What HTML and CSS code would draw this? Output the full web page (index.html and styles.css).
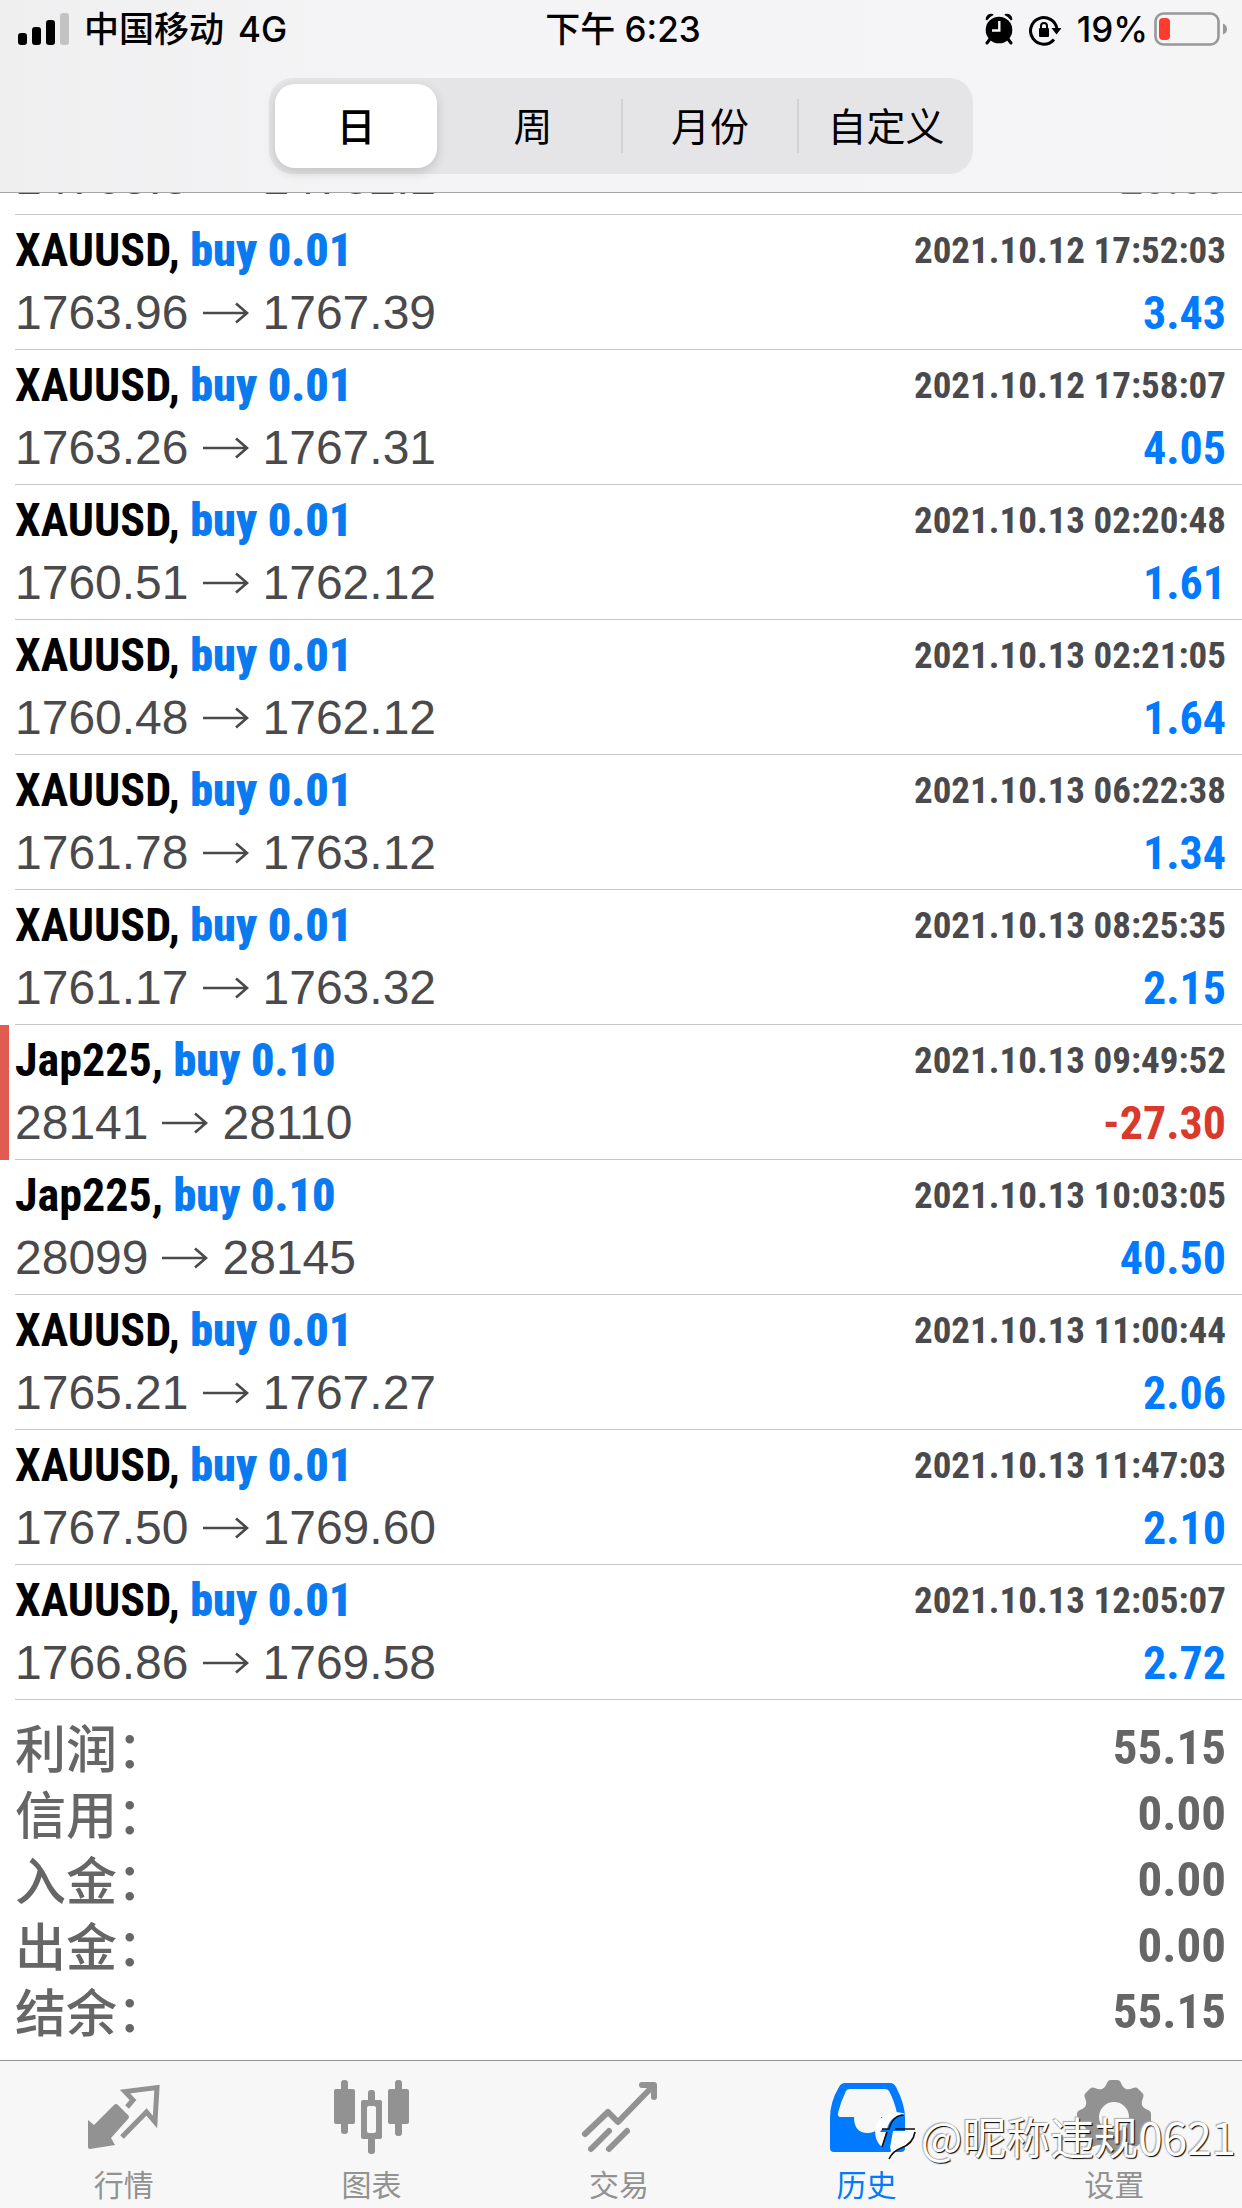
FILE: index.html
```
<!DOCTYPE html>
<html lang="zh-CN">
<head>
<meta charset="utf-8">
<meta name="viewport" content="width=device-width, initial-scale=1">
<title>历史</title>
<link rel="stylesheet" href="styles.css">
</head>
<body>
<svg class="defs" width="0" height="0" aria-hidden="true">
  <symbol id="arrow" viewBox="0 0 48 30"><path d="M1 15H45M34 5.500L45 15L34 24.500" fill="none" stroke="currentColor" stroke-width="2.600"/></symbol>
</svg>
<div class="app">
  <header class="top">
    <div class="status">
      <div class="status-left">
        <svg width="52" height="34" viewBox="0 0 52 34" aria-hidden="true">
          <rect x="0" y="21" width="9" height="12" rx="3"/><rect x="14" y="15" width="9" height="18" rx="3"/>
          <rect x="28" y="8" width="9" height="25" rx="3"/><rect x="42" y="1" width="9" height="32" rx="3" fill="#c3c3c4"/>
        </svg>
        <span>中国移动</span><span>4G</span>
      </div>
      <div class="status-time">下午 6:23</div>
      <div class="status-right">
        <svg width="28" height="34" viewBox="0 0 28 34" aria-hidden="true">
          <circle cx="14" cy="18" r="13.300"/>
          <path d="M.7 7.500A5.500 5.500 0 0 1 8 2L8.500 3Q4 5 2 8.500ZM27.300 7.500A5.500 5.500 0 0 0 20 2L19.500 3Q24 5 26 8.500Z"/>
          <path d="M5 27L2 31M23 27L26 31" stroke="#000" stroke-width="3" stroke-linecap="round"/>
          <path d="M14.300 9V18.500H7" fill="none" stroke="#f5f5f6" stroke-width="2.400"/>
        </svg>
        <svg width="32" height="34" viewBox="0 0 32 34" aria-hidden="true">
          <path d="M25 27.500A13.300 13.300 0 1 1 28 17" fill="none" stroke="#000" stroke-width="3"/>
          <path d="M22.500 16H32.500L27.500 22.500Z"/>
          <rect x="10" y="16" width="10" height="9" rx="1"/>
          <path d="M12 17V14A3 3 0 0 1 18 14V17" fill="none" stroke="#000" stroke-width="2"/>
        </svg>
        <span>19%</span>
        <svg width="74" height="34" viewBox="0 0 74 34" aria-hidden="true">
          <rect x="1.500" y="1.500" width="63" height="31" rx="8" fill="none" stroke="#98989a" stroke-width="2.600"/>
          <rect x="5" y="6" width="11" height="22" rx="4" fill="#ff3b30"/>
          <path d="M69 11.500Q73 13 73 17Q73 21 69 22.500Z" fill="#98989a"/>
        </svg>
      </div>
    </div>
    <div class="segments">
      <button class="segment selected" type="button">日</button>
      <button class="segment" type="button">周</button>
      <button class="segment divided" type="button">月份</button>
      <button class="segment divided" type="button">自定义</button>
    </div>
  </header>

  <main class="history">
    <ul class="deals">
      <li class="deal"><div class="deal-body">
        <div class="deal-head"></div>
        <div class="deal-foot"><span class="price">14765.8<svg class="arrow"><use href="#arrow"/></svg>14782.1</span><span class="profit">28.60</span></div>
      </div></li>
      <li class="deal"><div class="deal-body">
        <div class="deal-head"><span class="symbol">XAUUSD, <b>buy 0.01</b></span><time>2021.10.12 17:52:03</time></div>
        <div class="deal-foot"><span class="price">1763.96<svg class="arrow"><use href="#arrow"/></svg>1767.39</span><span class="profit">3.43</span></div>
      </div></li>
      <li class="deal"><div class="deal-body">
        <div class="deal-head"><span class="symbol">XAUUSD, <b>buy 0.01</b></span><time>2021.10.12 17:58:07</time></div>
        <div class="deal-foot"><span class="price">1763.26<svg class="arrow"><use href="#arrow"/></svg>1767.31</span><span class="profit">4.05</span></div>
      </div></li>
      <li class="deal"><div class="deal-body">
        <div class="deal-head"><span class="symbol">XAUUSD, <b>buy 0.01</b></span><time>2021.10.13 02:20:48</time></div>
        <div class="deal-foot"><span class="price">1760.51<svg class="arrow"><use href="#arrow"/></svg>1762.12</span><span class="profit">1.61</span></div>
      </div></li>
      <li class="deal"><div class="deal-body">
        <div class="deal-head"><span class="symbol">XAUUSD, <b>buy 0.01</b></span><time>2021.10.13 02:21:05</time></div>
        <div class="deal-foot"><span class="price">1760.48<svg class="arrow"><use href="#arrow"/></svg>1762.12</span><span class="profit">1.64</span></div>
      </div></li>
      <li class="deal"><div class="deal-body">
        <div class="deal-head"><span class="symbol">XAUUSD, <b>buy 0.01</b></span><time>2021.10.13 06:22:38</time></div>
        <div class="deal-foot"><span class="price">1761.78<svg class="arrow"><use href="#arrow"/></svg>1763.12</span><span class="profit">1.34</span></div>
      </div></li>
      <li class="deal"><div class="deal-body">
        <div class="deal-head"><span class="symbol">XAUUSD, <b>buy 0.01</b></span><time>2021.10.13 08:25:35</time></div>
        <div class="deal-foot"><span class="price">1761.17<svg class="arrow"><use href="#arrow"/></svg>1763.32</span><span class="profit">2.15</span></div>
      </div></li>
      <li class="deal stopped"><div class="deal-body">
        <div class="deal-head"><span class="symbol">Jap225, <b>buy 0.10</b></span><time>2021.10.13 09:49:52</time></div>
        <div class="deal-foot"><span class="price">28141<svg class="arrow"><use href="#arrow"/></svg>28110</span><span class="profit loss">-27.30</span></div>
      </div></li>
      <li class="deal"><div class="deal-body">
        <div class="deal-head"><span class="symbol">Jap225, <b>buy 0.10</b></span><time>2021.10.13 10:03:05</time></div>
        <div class="deal-foot"><span class="price">28099<svg class="arrow"><use href="#arrow"/></svg>28145</span><span class="profit">40.50</span></div>
      </div></li>
      <li class="deal"><div class="deal-body">
        <div class="deal-head"><span class="symbol">XAUUSD, <b>buy 0.01</b></span><time>2021.10.13 11:00:44</time></div>
        <div class="deal-foot"><span class="price">1765.21<svg class="arrow"><use href="#arrow"/></svg>1767.27</span><span class="profit">2.06</span></div>
      </div></li>
      <li class="deal"><div class="deal-body">
        <div class="deal-head"><span class="symbol">XAUUSD, <b>buy 0.01</b></span><time>2021.10.13 11:47:03</time></div>
        <div class="deal-foot"><span class="price">1767.50<svg class="arrow"><use href="#arrow"/></svg>1769.60</span><span class="profit">2.10</span></div>
      </div></li>
      <li class="deal"><div class="deal-body">
        <div class="deal-head"><span class="symbol">XAUUSD, <b>buy 0.01</b></span><time>2021.10.13 12:05:07</time></div>
        <div class="deal-foot"><span class="price">1766.86<svg class="arrow"><use href="#arrow"/></svg>1769.58</span><span class="profit">2.72</span></div>
      </div></li>
    </ul>
    <dl class="totals">
      <div class="total"><dt>利润：</dt><dd>55.15</dd></div>
      <div class="total"><dt>信用：</dt><dd>0.00</dd></div>
      <div class="total"><dt>入金：</dt><dd>0.00</dd></div>
      <div class="total"><dt>出金：</dt><dd>0.00</dd></div>
      <div class="total"><dt>结余：</dt><dd>55.15</dd></div>
    </dl>
  </main>

  <nav class="tabs">
    <a class="tab" href="#quotes">
      <svg class="tab-icon" viewBox="0 0 84 80" aria-hidden="true">
        <path d="M45 31L51 24L43 15.500L75 11.500L73 46L64.500 36L40 61" fill="none" stroke="currentColor" stroke-width="5"/>
        <path d="M32 29Q34 27 36 29L46 39Q48 41 46 43L29 62L33 69L8 73Q6 73 6 71V44L12 49Z" fill="currentColor"/>
      </svg>
      <span>行情</span>
    </a>
    <a class="tab" href="#charts">
      <svg class="tab-icon" viewBox="0 0 84 80" fill="currentColor" aria-hidden="true">
        <rect x="5" y="13" width="21" height="35" rx="2"/><rect x="12" y="4" width="7" height="54" rx="3"/>
        <rect x="59" y="13" width="21" height="35" rx="2"/><rect x="66" y="4" width="7" height="56" rx="3"/>
        <rect x="39" y="14" width="7" height="64" rx="3"/><rect x="32" y="24" width="21" height="39" rx="2"/>
        <rect x="38" y="30" width="9" height="27" rx="2" fill="#f7f7f7"/>
      </svg>
      <span>图表</span>
    </a>
    <a class="tab" href="#trade">
      <svg class="tab-icon" viewBox="0 0 84 80" fill="none" stroke="currentColor" stroke-width="6" stroke-linecap="round" stroke-linejoin="round" aria-hidden="true">
        <path d="M8 58L31 36L41 46L76 10M65 9H77V21M14 73L32 55M32 73L50 55"/>
      </svg>
      <span>交易</span>
    </a>
    <a class="tab active" href="#history" aria-current="page">
      <svg class="tab-icon" viewBox="0 0 84 80" fill="currentColor" aria-hidden="true">
        <path fill-rule="evenodd" d="M20 7H65Q69 7 71 11Q80 28 80 42V72Q80 76 76 76H9Q5 76 5 72V42Q5 26 14 11Q16 7 20 7ZM25 13Q22 13 21 15Q16 25 13 37Q12 41 16 41H29Q29 57 42.500 57Q56 57 56 41H69Q73 41 72 37Q69 24 64 15Q63 13 60 13Z"/>
      </svg>
      <span>历史</span>
    </a>
    <a class="tab" href="#settings">
      <svg class="tab-icon" viewBox="0 0 84 80" aria-hidden="true">
        <circle cx="42" cy="41" r="22.500" fill="none" stroke="currentColor" stroke-width="15"/>
        <g fill="currentColor">
          <path id="tooth" d="M30 13Q33 12 35 7Q36 4 39 4H45Q48 4 49 7Q51 12 54 13L50 20H34Z"/>
          <use href="#tooth" transform="rotate(45 42 41)"/><use href="#tooth" transform="rotate(90 42 41)"/>
          <use href="#tooth" transform="rotate(135 42 41)"/><use href="#tooth" transform="rotate(180 42 41)"/>
          <use href="#tooth" transform="rotate(225 42 41)"/><use href="#tooth" transform="rotate(270 42 41)"/>
          <use href="#tooth" transform="rotate(315 42 41)"/>
        </g>
      </svg>
      <span>设置</span>
    </a>
  </nav>

  <div class="watermark">
    <svg width="46" height="52" viewBox="0 0 46 52" aria-hidden="true">
      <path d="M31 4Q22 1 14 5Q3 10 2 20Q2 32 9 37L13 22H7L9 19H14Q17 6 31 4ZM20 21H42Q40 34 28 38Q19 41 16 48Q19 39 17 38Z" fill="#fff"/>
      <path d="M31 5Q20 5 16 19H9M22 19H42M9 37L14 22M42 22Q40 34 28 38Q20 41 16 49" fill="none" stroke="#111" stroke-width="1.600"/>
      <path d="M31 4Q22 1 14 5Q3 10 2 20" fill="none" stroke="#fff"/>
    </svg>
    <span>@昵称违规0621</span>
  </div>
</div>
</body>
</html>
```
FILE: styles.css
```
* {
  box-sizing: border-box;
}

body {
  margin: 0;
  background: #fff;
  font-family: "Liberation Sans", "Noto Sans CJK SC", sans-serif;
}

.defs {
  position: absolute;
}

.app {
  position: relative;
  display: flex;
  flex-direction: column;
  height: 100vh;
}

/* status bar and period switch */
.top {
  flex: none;
  padding-bottom: 18px;
  border-bottom: 1px solid #a6a6a8;
  background: linear-gradient(90deg, #efeff0, #f4f4f6 30%, #f5f5f6);
}

.status {
  display: grid;
  grid-template-columns: 1fr auto 1fr;
  align-items: center;
  height: 58px;
  padding: 0 14px 0 18px;
  font: 500 35px/58px Inter, "Noto Sans CJK SC", sans-serif;
}

.status-left,
.status-right {
  display: flex;
  align-items: center;
}

.status-left {
  gap: 14px;
}

.status-right {
  justify-content: flex-end;
  gap: 16px;
}

.status-right span {
  margin-right: -10px;
}

.segments {
  display: grid;
  grid-template-columns: repeat(4, 1fr);
  width: 704px;
  max-width: 100%;
  height: 96px;
  margin: 20px auto 0;
  border-radius: 24px;
  background: #e5e5e7;
}

.segment {
  padding: 0 0 4px;
  border: 0;
  background: none;
  color: #000;
  font: 400 39px/50px "Noto Sans CJK SC", sans-serif;
}

.segment.divided {
  height: 54px;
  align-self: center;
  border-left: 2px solid #d2d2d4;
}

.segment.selected {
  margin: 6px 8px 6px 6px;
  border-radius: 20px;
  background: #fff;
  box-shadow: 0 4px 12px rgba(0, 0, 0, .16);
  font-weight: 500;
}

/* closed deals, newest at the bottom */
.history {
  display: flex;
  flex: 1;
  flex-direction: column;
  justify-content: flex-end;
  min-height: 0;
  overflow: hidden;
}

.deals {
  flex: none;
  margin: 0;
  padding: 0;
  list-style: none;
}

.deal {
  padding-left: 15px;
}

.deal.stopped {
  padding-left: 6px;
  border-left: 9px solid #e05c50;
}

.deal-body {
  padding: 7px 16px 2px 0;
  border-bottom: 1px solid #c6c6c8;
}

.deal-head,
.deal-foot {
  display: flex;
  align-items: center;
  justify-content: space-between;
}

.deal-head {
  height: 57px;
  font: 700 46px/57px "Roboto Condensed", Roboto, sans-serif;
}

.deal-head b {
  color: #0a7af0;
}

.deal-head time {
  color: #4a4a4d;
  font-size: 37px;
}

.deal-foot {
  height: 68px;
  line-height: 68px;
}

.price {
  display: flex;
  align-items: center;
  color: #4a4a4d;
  font-size: 48px;
}

.arrow {
  width: 48px;
  height: 30px;
  margin: 0 13px;
}

.profit {
  color: #007aff;
  font: 700 46px/68px "Roboto Condensed", Roboto, sans-serif;
}

.profit.loss {
  color: #d93a2b;
}

.totals {
  flex: none;
  margin: 0;
  padding: 15px 16px 15px 15px;
  color: #666;
}

.total {
  display: flex;
  align-items: center;
  justify-content: space-between;
  height: 66px;
}

.total dt {
  padding-bottom: 4px;
  font: 500 51px/62px "Noto Sans CJK SC", sans-serif;
}

.total dd {
  margin: 0;
  font: 700 49px/66px "Roboto Condensed", Roboto, sans-serif;
}

/* bottom navigation */
.tabs {
  display: grid;
  flex: none;
  grid-template-columns: repeat(5, 1fr);
  height: 148px;
  padding-right: 4px;
  border-top: 1px solid #919193;
  background: #f7f7f7;
}

.tab {
  display: flex;
  flex-direction: column;
  align-items: center;
  padding-top: 15px;
  color: #929292;
  font: 400 30px/40px "Noto Sans CJK SC", sans-serif;
  text-decoration: none;
}

.tab.active {
  color: #007aff;
}

.tab-icon {
  width: 84px;
  height: 80px;
  margin-bottom: 7px;
}

.watermark {
  position: absolute;
  right: 6px;
  bottom: 42px;
  display: flex;
  align-items: center;
  gap: 2px;
  color: #fff;
  font: 400 44px/60px "Noto Sans CJK SC", sans-serif;
  text-shadow: 1px 1px 1px #000, -1px -1px 1px #aaa;
}
```
